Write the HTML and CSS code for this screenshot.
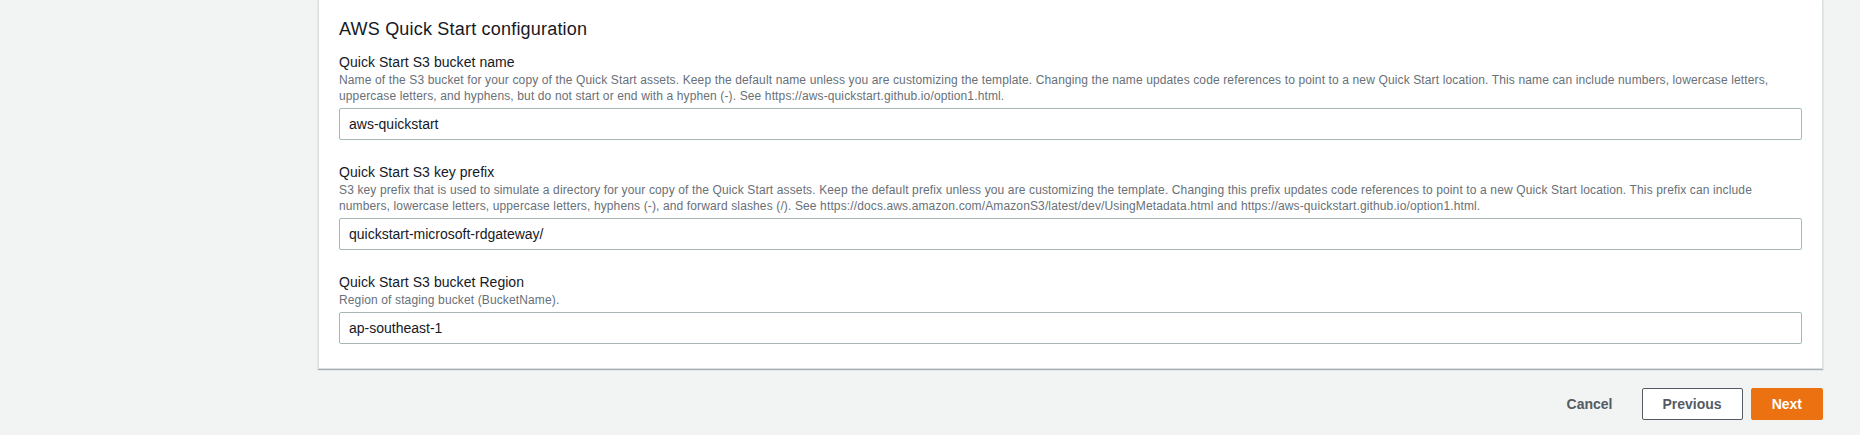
FILE: index.html
```html
<!DOCTYPE html>
<html lang="en">
<head>
<meta charset="utf-8">
<title>AWS Quick Start configuration</title>
<link rel="stylesheet" href="styles.css">
</head>
<body>
<div class="page">
  <section class="card">
    <h2 class="card-title">AWS Quick Start configuration</h2>

    <div class="field">
      <label class="field-label" for="bucket">Quick Start S3 bucket name</label>
      <p class="field-desc">Name of the S3 bucket for your copy of the Quick Start assets. Keep the default name unless you are customizing the template. Changing the name updates code references to point to a new Quick Start location. This name can include numbers, lowercase letters, uppercase letters, and hyphens, but do not start or end with a hyphen (-). See https://aws-quickstart.github.io/option1.html.</p>
      <input class="field-input" id="bucket" type="text" value="aws-quickstart">
    </div>

    <div class="field">
      <label class="field-label" for="prefix">Quick Start S3 key prefix</label>
      <p class="field-desc">S3 key prefix that is used to simulate a directory for your copy of the Quick Start assets. Keep the default prefix unless you are customizing the template. Changing this prefix updates code references to point to a new Quick Start location. This prefix can include numbers, lowercase letters, uppercase letters, hyphens (-), and forward slashes (/). See https://docs.aws.amazon.com/AmazonS3/latest/dev/UsingMetadata.html and https://aws-quickstart.github.io/option1.html.</p>
      <input class="field-input" id="prefix" type="text" value="quickstart-microsoft-rdgateway/">
    </div>

    <div class="field">
      <label class="field-label" for="region">Quick Start S3 bucket Region</label>
      <p class="field-desc">Region of staging bucket (BucketName).</p>
      <input class="field-input" id="region" type="text" value="ap-southeast-1">
    </div>
  </section>

  <div class="actions">
    <button class="btn btn-link" type="button">Cancel</button>
    <button class="btn btn-normal" type="button">Previous</button>
    <button class="btn btn-primary" type="button">Next</button>
  </div>
</div>
</body>
</html>
```

FILE: styles.css
```css
html, body {
  margin: 0;
  padding: 0;
}

body {
  background: #f2f3f3;
  font-family: "Liberation Sans", Arial, sans-serif;
  color: #16191f;
  height: 435px;
  overflow: hidden;
}

.page {
  margin: 0 37px 0 318px;
}

.card {
  background: #ffffff;
  border: 1px solid #dadfdf;
  border-top: none;
  box-shadow: 0 1px 1px 0 rgba(0, 28, 36, 0.3);
  padding: 18px 20px 24px 20px;
}

.card-title {
  margin: 0 0 12px 0;
  font-size: 18px;
  line-height: 22px;
  font-weight: 400;
  letter-spacing: 0.2px;
  color: #16191f;
}

.field {
  display: flex;
  flex-direction: column;
}

.field + .field {
  margin-top: 22px;
}

.field-label {
  font-size: 14px;
  line-height: 20px;
  letter-spacing: 0.05px;
  color: #16191f;
}

.field-desc {
  margin: 0 0 4px 0;
  font-size: 12px;
  line-height: 16px;
  letter-spacing: 0.13px;
  color: #687078;
}

.field-input {
  box-sizing: border-box;
  width: 100%;
  height: 32px;
  margin: 0;
  padding: 0 9px;
  border: 1px solid #aab7b8;
  border-radius: 2px;
  background: #ffffff;
  font-family: "Liberation Sans", Arial, sans-serif;
  font-size: 14px;
  color: #16191f;
  outline: none;
}

.actions {
  display: flex;
  justify-content: flex-end;
  gap: 8px;
  margin-top: 19px;
}

.btn {
  box-sizing: border-box;
  height: 32px;
  padding: 0 20px;
  border: 1px solid transparent;
  border-radius: 2px;
  font-family: "Liberation Sans", Arial, sans-serif;
  font-size: 14px;
  font-weight: 700;
  line-height: 30px;
  cursor: pointer;
}

.btn-link {
  background: transparent;
  color: #545b64;
}

.btn-normal {
  background: #ffffff;
  border-color: #545b64;
  color: #545b64;
}

.btn-primary {
  background: #ec7211;
  border-color: #ec7211;
  color: #ffffff;
}
```
